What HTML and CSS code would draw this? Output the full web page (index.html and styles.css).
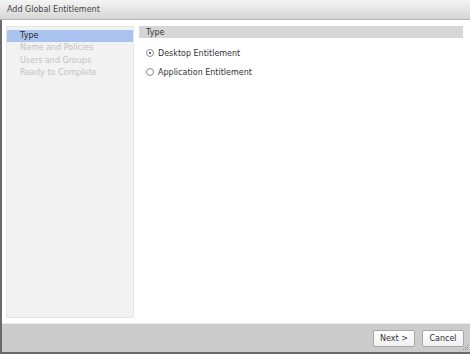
FILE: index.html
```html
<!DOCTYPE html>
<html>
<head>
<meta charset="utf-8">
<link rel="stylesheet" href="styles.css">
</head>
<body>
<div class="dialog">
  <div class="titlebar">Add Global Entitlement</div>
  <div class="main">
    <div class="nav">
      <div class="nav-item active">Type</div>
      <div class="nav-item">Name and Policies</div>
      <div class="nav-item">Users and Groups</div>
      <div class="nav-item">Ready to Complete</div>
    </div>
    <div class="content">
      <div class="section-header">Type</div>
      <div class="options">
        <label class="option"><span class="radio checked"></span>Desktop Entitlement</label>
        <label class="option"><span class="radio"></span>Application Entitlement</label>
      </div>
    </div>
  </div>
  <div class="footer">
    <button class="btn">Next &gt;</button>
    <button class="btn">Cancel</button>
    <svg class="grip" width="6" height="6" viewBox="0 0 6 6">
      <rect x="4" y="0" width="1" height="1" fill="#8a8a8a"/>
      <rect x="2" y="2" width="1" height="1" fill="#8a8a8a"/>
      <rect x="4" y="2" width="1" height="1" fill="#8a8a8a"/>
      <rect x="0" y="4" width="1" height="1" fill="#8a8a8a"/>
      <rect x="2" y="4" width="1" height="1" fill="#8a8a8a"/>
      <rect x="4" y="4" width="1" height="1" fill="#8a8a8a"/>
    </svg>
  </div>
</div>
</body>
</html>
```

FILE: styles.css
```css
html, body {
  margin: 0;
  padding: 0;
  width: 470px;
  height: 354px;
  overflow: hidden;
  background: #fff;
}
.dialog {
  width: 470px;
  height: 354px;
  box-sizing: border-box;
  border-left: 2px solid #6a6a6a;
  border-bottom: 2px solid #6a6a6a;
  display: flex;
  flex-direction: column;
  font-family: "DejaVu Sans", Verdana, sans-serif;
  font-size: 8px;
  color: #333;
}
.titlebar {
  height: 20px;
  box-sizing: border-box;
  line-height: 19px;
  font-size: 8px;
  color: #454545;
  background: linear-gradient(#f4f4f4, #d6d6d6);
  border-bottom: 1px solid #b4b4b4;
  margin-left: -2px;
  padding-left: 7px;
}
.main {
  flex: 1;
  display: flex;
  padding: 6px 6px 5px 4px;
  gap: 5px;
  background: #fff;
}
.nav {
  width: 128px;
  background: #f2f2f2;
  border: 1px solid #e6e6e6;
  padding-top: 3px;
  box-sizing: border-box;
}
.nav-item {
  height: 12.4px;
  line-height: 12.4px;
  padding-left: 13px;
  color: #c2c2c2;
}
.nav-item.active {
  background: #a9c3ee;
  color: #2a2a2a;
}
.content {
  flex: 1;
  margin-right: 1px;
}
.section-header {
  height: 12px;
  line-height: 13px;
  background: #d6d6d6;
  padding-left: 7px;
  color: #333;
}
.options {
  padding: 9px 0 0 7px;
  display: flex;
  flex-direction: column;
  gap: 7px;
}
.option {
  display: flex;
  align-items: center;
  gap: 4px;
  height: 12px;
  color: #333;
}
.radio {
  width: 8px;
  height: 8px;
  border: 1px solid #8c8c8c;
  border-radius: 50%;
  box-sizing: border-box;
  background: #fff;
  position: relative;
}
.radio.checked::after {
  content: "";
  position: absolute;
  left: 2px;
  top: 2px;
  width: 2px;
  height: 2px;
  border-radius: 50%;
  background: #333;
}
.footer {
  height: 29px;
  box-sizing: border-box;
  background: #cccccc;
  border-top: 1px solid #e8e8e8;
  display: flex;
  justify-content: flex-end;
  align-items: center;
  gap: 7px;
  padding-right: 6px;
  position: relative;
}
.btn {
  font-family: "DejaVu Sans", Verdana, sans-serif;
  font-size: 8px;
  color: #333;
  height: 17px;
  width: 42px;
  padding: 0;
  background: linear-gradient(#ffffff, #f0f0f0);
  border: 1px solid #a8a8a8;
  border-radius: 2px;
}
.grip {
  position: absolute;
  right: 1px;
  bottom: 1px;
}
```
